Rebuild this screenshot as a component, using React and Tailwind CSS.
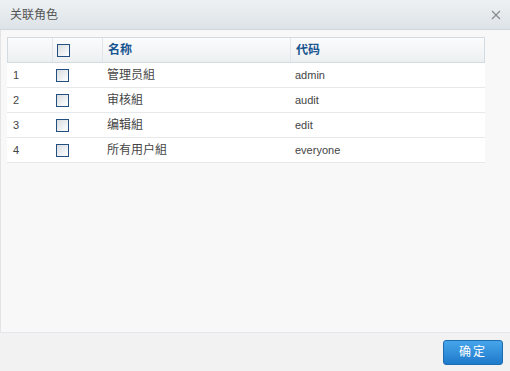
import React from 'react';

const rows = [
    { id: 1, name: '管理员組', code: 'admin' },
    { id: 2, name: '审核組', code: 'audit' },
    { id: 3, name: '编辑組', code: 'edit' },
    { id: 4, name: '所有用户組', code: 'everyone' },
];

const cjk = { fontFamily: '"Liberation Sans", "Noto Sans CJK SC", sans-serif' };

const Check = () => (
    <span className="block w-[13px] h-[13px] border border-[#234f80] bg-gradient-to-br from-[#d8dde1] to-white" />
);

export default function App() {
    return (
        <div className="w-[510px] h-[371px] flex flex-col bg-[#f8f8f8] text-[12px]" style={cjk}>
            {/* Title bar */}
            <div className="h-[30px] flex-none flex items-center justify-between pl-[10px] pr-[9px] bg-gradient-to-b from-[#edf1f3] to-[#dde3e7] border-b border-[#cfd6db]">
                <span className="text-[#555] text-[12px]">关联角色</span>
                <svg width="10" height="10" viewBox="0 0 10 10" className="text-[#8a8a8a]">
                    <path d="M1 1L9 9M9 1L1 9" stroke="currentColor" strokeWidth="1.2" />
                </svg>
            </div>

            {/* Body */}
            <div className="flex-1 border-l border-[#e4e4e4] pt-[7px] pl-[6px] pr-[25px]">
                <div className="w-[478px]">
                    {/* Header */}
                    <div className="grid grid-cols-[45px_50px_188px_1fr] h-[26px] border border-[#d3dbe1] bg-gradient-to-b from-[#fcfcfc] to-[#eceff1] font-bold text-[#17548f]">
                        <div className="border-r border-[#e2e6ea]" />
                        <div className="flex items-center pl-[4px] border-r border-[#e2e6ea]">
                            <Check />
                        </div>
                        <div className="flex items-center pl-[5px] border-r border-[#e2e6ea]">名称</div>
                        <div className="flex items-center pl-[5px]">代码</div>
                    </div>

                    {/* Rows */}
                    {rows.map((r) => (
                        <div
                            key={r.id}
                            className="grid grid-cols-[45px_50px_188px_1fr] h-[25px] bg-white border-b border-[#e6e9ec] text-[#444]"
                        >
                            <div className="flex items-center pl-[6px] text-[11px]">{r.id}</div>
                            <div className="flex items-center pl-[4px]">
                                <Check />
                            </div>
                            <div className="flex items-center pl-[5px]">{r.name}</div>
                            <div className="flex items-center pl-[5px] text-[11px]">{r.code}</div>
                        </div>
                    ))}
                </div>
            </div>

            {/* Footer */}
            <div className="h-[39px] flex-none flex items-center justify-end pr-[7px] bg-[#f2f2f2] border-t border-[#e2e5ea]">
                <button className="w-[60px] h-[25px] rounded-[3px] border border-[#1c6cb0] bg-gradient-to-b from-[#46a5ea] to-[#1e7acb] text-white text-[12px] tracking-[2px]">
                    确定
                </button>
            </div>
        </div>
    );
}
